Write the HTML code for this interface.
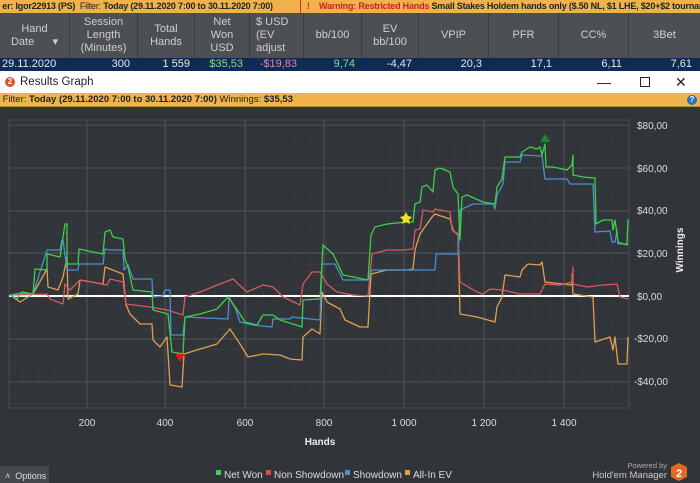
<!DOCTYPE html>
<html><head><meta charset="utf-8"><style>
*{margin:0;padding:0;box-sizing:border-box}
body{width:700px;height:483px;overflow:hidden;background:#313438;font-family:"Liberation Sans",sans-serif;position:relative}
.top{position:absolute;left:0;top:0;width:700px;height:13px;background:#f0b24a;font-size:9px;line-height:13px;color:#222;white-space:nowrap;font-weight:bold;overflow:hidden;letter-spacing:-0.2px}
.hdr{position:absolute;left:0;top:13px;width:700px;height:45px;background:#4c4f53;color:#d0d0d0;font-size:11px}
.hdr div{position:absolute;top:0;height:45px;display:flex;align-items:center;justify-content:center;text-align:center;line-height:13px;border-right:1px solid #3a3c40}
.row{position:absolute;left:0;top:58px;width:700px;height:13px;background:#0f2a55;color:#e8e8e8;font-size:11px;line-height:13px}
.row span{position:absolute;text-align:right}
.title{position:absolute;left:0;top:71px;width:700px;height:22px;background:#fff;font-size:11.5px;line-height:22px;color:#222}
.filt{position:absolute;left:0;top:93px;width:700px;height:14px;background:#f0b24a;font-size:9.5px;line-height:14px;color:#222;border-bottom:1px solid #c08a30;white-space:nowrap;overflow:hidden}
</style></head><body>
<div class="top">&nbsp;er: Igor22913 (PS) &nbsp;<span style="font-weight:normal">Filter:</span> Today (29.11.2020 7:00 to 30.11.2020 7:00)
<span style="position:absolute;left:300px;top:0;width:400px;height:13px;padding-left:18px;border-left:1px solid #c33;background:#f0b24a"><span style="color:#d22;position:absolute;left:6px">!</span><span style="color:#c22">Warning: Restricted Hands</span> Small Stakes Holdem hands only ($.50 NL, $1 LHE, $20+$2 tournaments</span></div>
<div class="hdr">
<div style="left:0;width:70px">Hand<br>Date&nbsp;&nbsp;&nbsp;&nbsp;&nbsp;&nbsp;▾</div>
<div style="left:70px;width:68px">Session<br>Length<br>(Minutes)</div>
<div style="left:138px;width:57px">Total<br>Hands</div>
<div style="left:195px;width:55px">Net<br>Won<br>USD</div>
<div style="left:250px;width:54px;text-align:left;justify-content:flex-start;padding-left:6px">$ USD<br>(EV<br>adjust</div>
<div style="left:304px;width:58px">bb/100</div>
<div style="left:362px;width:57px">EV<br>bb/100</div>
<div style="left:419px;width:70px">VPIP</div>
<div style="left:489px;width:70px">PFR</div>
<div style="left:559px;width:70px">CC%</div>
<div style="left:629px;width:71px;border:none">3Bet</div>
</div>
<div class="row"><span style="left:2px">29.11.2020</span><span style="right:570px">300</span><span style="right:510px">1 559</span><span style="right:457px;color:#7fe08a">$35,53</span><span style="right:403px;color:#e08aa0">-$19,83</span><span style="right:345px;color:#7fe08a">9,74</span><span style="right:288px">-4,47</span><span style="right:218px">20,3</span><span style="right:148px">17,1</span><span style="right:78px">6,11</span><span style="right:8px">7,61</span></div>
<div class="title"><span style="position:absolute;left:5px;top:6px;width:10px;height:10px;border-radius:50%;background:#d9552a;color:#fff;font-size:8px;line-height:10px;text-align:center;font-weight:bold">2</span><span style="position:absolute;left:20px">Results Graph</span>
<span style="position:absolute;left:597px;top:0;font-size:14px">—</span><span style="position:absolute;left:640px;top:6px;width:10px;height:10px;border:1px solid #222"></span><span style="position:absolute;left:675px;top:0;font-size:14px">✕</span></div>
<div class="filt">&nbsp;Filter: <b>Today (29.11.2020 7:00 to 30.11.2020 7:00)</b> Winnings: <b>$35,53</b><span style="position:absolute;left:687px;top:2px;width:10px;height:10px;border-radius:50%;background:#2a6fc0;color:#fff;font-size:8px;line-height:10px;text-align:center;font-weight:bold">?</span></div>
<svg style="position:absolute;left:0;top:107px" width="700" height="376" viewBox="0 107 700 376" font-family="Liberation Sans, sans-serif">
<defs><pattern id="mg" x="7" y="125" width="15.94" height="10.7" patternUnits="userSpaceOnUse"><path d="M0 0V10.7M0 0H15.94" stroke="#3d4045" stroke-width="1" fill="none"/></pattern></defs>
<rect x="9" y="120" width="620" height="288" fill="url(#mg)" stroke="#4a4d52"/>
<g stroke="#50535a" stroke-width="1">
<path d="M87 120V408M165 120V408M245 120V408M324 120V408M404 120V408M484 120V408M564 120V408"/>
<path d="M9 125H629M9 168H629M9 211H629M9 253H629M9 339H629M9 382H629"/>
</g>
<line x1="9" y1="296" x2="629" y2="296" stroke="#fff" stroke-width="2"/>
<g fill="none" stroke-width="1.3" stroke-linejoin="round">
<polyline stroke="#e0a050" points="10,295 20,302 33,294 47,269 48,287 58,290 63,277 67,257 68,299 78,294 80,280 103,284 105,267 123,274 126,305 130,314 140,324 152,324 153,340 160,347 167,337 170,385 182,387 184,354 200,349 217,344 230,329 240,344 248,357 263,354 280,355 290,359 302,360 303,337 312,329 320,334 322,292 327,302 340,309 345,320 360,327 368,327 371,274 387,270 407,270 413,269 415,250 420,234 432,217 435,214 450,219 453,230 458,235 460,314 477,317 495,322 497,307 502,297 505,275 520,277 522,270 528,264 540,265 542,262 545,282 572,285 572,274 573,294 593,297 595,342 610,337 613,350 615,337 618,364 627,364 628,337"/>
<polyline stroke="#d45a62" points="10,295 47,294 50,299 63,304 65,284 70,290 80,280 107,285 110,279 123,282 126,304 150,307 167,310 183,315 185,297 200,292 220,284 233,279 247,292 263,285 273,287 283,297 300,305 303,284 312,272 320,272 327,284 337,292 353,295 368,296 372,254 387,250 403,250 413,249 415,230 420,229 423,210 433,212 435,209 450,212 452,230 458,234 460,282 477,292 483,294 490,289 503,290 520,294 540,294 545,284 560,285 572,282 573,267 573,284 587,287 603,285 617,284 620,297 628,299"/>
<polyline stroke="#4a90d0" points="10,295 20,293 33,294 47,250 60,250 62,240 63,240 67,270 78,270 79,264 103,264 105,249 110,250 123,250 124,270 128,265 133,279 152,279 153,297 163,296 165,290 170,290 171,335 183,335 185,317 228,319 229,297 236,310 240,322 253,325 272,327 273,319 290,319 292,317 320,320 322,264 335,264 343,280 368,280 372,270 413,270 435,270 436,254 458,254 460,210 473,204 493,204 495,209 497,195 503,184 505,162 520,162 522,155 542,156 545,179 567,179 570,184 593,184 595,232 610,231 612,242 615,242 617,230 618,244 628,244"/>
<polyline stroke="#3ed04a" points="10,295 17,299 22,292 33,294 35,269 47,270 47,254 60,257 65,224 67,224 67,264 78,264 79,249 103,254 105,232 110,230 113,237 123,239 125,259 128,267 133,290 152,292 153,310 168,314 172,352 183,354 185,317 200,314 217,309 228,297 233,304 240,314 245,322 257,325 263,315 273,315 280,320 293,324 302,327 303,300 320,299 323,245 333,254 343,275 368,280 371,235 375,227 387,224 407,222 413,222 415,204 420,202 422,187 427,185 433,192 435,170 440,168 450,172 453,187 458,194 460,240 462,197 467,195 483,202 495,204 497,187 502,179 505,157 520,157 522,152 530,147 537,149 540,147 542,155 545,144 546,167 553,167 567,170 572,165 573,155 573,175 583,177 595,178 596,224 603,220 612,220 613,230 615,220 618,242 627,245 628,219"/>
</g>
<polygon points="406,212 408,216 412,217 409,220 410,224 406,222 402,224 403,220 400,217 404,216" fill="#f5e020"/>
<polygon points="545,134 550,142 540,142" fill="#1a8a2a"/>
<polygon points="175,354 185,354 180,362" fill="#e01818"/>
<g fill="#ddd" font-size="10">
<text x="87" y="426" text-anchor="middle">200</text><text x="165" y="426" text-anchor="middle">400</text><text x="245" y="426" text-anchor="middle">600</text><text x="324" y="426" text-anchor="middle">800</text><text x="404" y="426" text-anchor="middle">1 000</text><text x="484" y="426" text-anchor="middle">1 200</text><text x="564" y="426" text-anchor="middle">1 400</text>
<text x="637" y="129">$80,00</text><text x="637" y="172">$60,00</text><text x="637" y="214">$40,00</text><text x="637" y="257">$20,00</text><text x="637" y="300">$0,00</text><text x="634" y="342">-$20,00</text><text x="634" y="385">-$40,00</text>
</g>
<text x="320" y="445" fill="#eee" font-size="10" font-weight="bold" text-anchor="middle">Hands</text>
<text transform="translate(683,250) rotate(-90)" fill="#eee" font-size="10" font-weight="bold" text-anchor="middle">Winnings</text>
<rect x="0" y="466" width="49" height="17" fill="#45484d"/>
<text x="5" y="479" fill="#ddd" font-size="9">˄ &#160;Options</text>
<g font-size="10" fill="#ddd">
<rect x="216" y="470" width="5" height="5" fill="#3ed04a"/><text x="224" y="478">Net Won</text>
<rect x="266" y="470" width="5" height="5" fill="#e04850"/><text x="274" y="478">Non Showdown</text>
<rect x="345" y="470" width="5" height="5" fill="#4a90d0"/><text x="353" y="478">Showdown</text>
<rect x="405" y="470" width="5" height="5" fill="#e0a050"/><text x="413" y="478">All-In EV</text>
</g>
<text x="667" y="468" fill="#aaa" font-size="7.5" text-anchor="end">Powered by</text>
<text x="667" y="478" fill="#ccc" font-size="9.5" text-anchor="end">Hold'em Manager</text>
<polygon points="679,463 687,467 687,477 679,481 671,477 671,467" fill="#e06a20"/>
<text x="679" y="477" fill="#fff" font-size="11" font-weight="bold" text-anchor="middle">2</text>
</svg>
</body></html>
